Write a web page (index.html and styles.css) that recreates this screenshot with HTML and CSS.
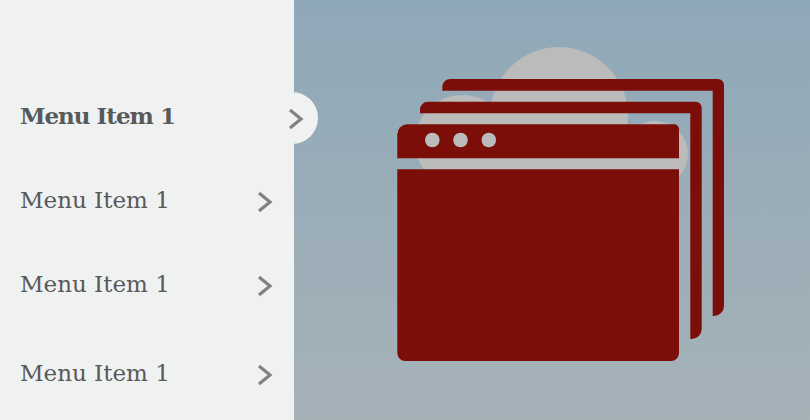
FILE: index.html
```html
<!DOCTYPE html>
<html lang="en">
<head>
<meta charset="utf-8">
<title>Menu</title>
<link rel="stylesheet" href="styles.css">
</head>
<body>
<div class="app">
  <nav class="menu">
    <a class="item active"><span class="label">Menu Item 1</span><span class="tab"><svg class="chev" viewBox="0 0 16 22"><path d="M1 2l11 9-11 9"/></svg></span></a>
    <a class="item"><span class="label">Menu Item 1</span><svg class="chev" viewBox="0 0 16 22"><path d="M1 2l11 9-11 9"/></svg></a>
    <a class="item"><span class="label">Menu Item 1</span><svg class="chev" viewBox="0 0 16 22"><path d="M1 2l11 9-11 9"/></svg></a>
    <a class="item last"><span class="label">Menu Item 1</span><svg class="chev" viewBox="0 0 16 22"><path d="M1 2l11 9-11 9"/></svg></a>
  </nav>
  <main class="stage">
    <svg class="art" viewBox="294 0 516 420" aria-hidden="true">
      <g fill="#bbbbbb">
        <circle cx="559" cy="116" r="69"/>
        <circle cx="462" cy="142" r="47"/>
        <circle cx="655" cy="154" r="33"/>
        <rect x="462" y="140" width="193" height="40"/>
      </g>
      <g fill="#7b0e08">
        <path d="M442.300 90.700v-3.700a8 8 0 0 1 8-8H718a6 6 0 0 1 6 6v221a10 10 0 0 1-10 10h-1.300V90.700z"/>
        <path d="M420 113.300v-3.600a8 8 0 0 1 8-8h267.700a6 6 0 0 1 6 6V329a10 10 0 0 1-10 10h-1.400V113.300z"/>
        <path d="M397.300 158.300v-24a10 10 0 0 1 10-10H674a5 5 0 0 1 5 5v29z"/>
        <path d="M397.300 169.300H679V353a8 8 0 0 1-8 8H405.300a8 8 0 0 1-8-8z"/>
      </g>
      <g fill="#bbbbbb">
        <circle cx="432.300" cy="140" r="7.300"/>
        <circle cx="460.500" cy="140" r="7.300"/>
        <circle cx="488.800" cy="140" r="7.300"/>
      </g>
    </svg>
  </main>
</div>
</body>
</html>
```
FILE: styles.css
```css
* { box-sizing: border-box; }
html, body { margin: 0; height: 100%; }
body { overflow: hidden; }
.app { display: flex; width: 810px; height: 420px; }
.menu {
  width: 294px;
  flex: none;
  background: #f0f2f1;
  padding: 74px 20px 0;
  display: flex;
  flex-direction: column;
  position: relative;
  z-index: 1;
}
.item {
  display: flex;
  align-items: center;
  justify-content: space-between;
  height: 84px;
  color: #58595b;
  font-family: "DejaVu Serif", "Liberation Serif", serif;
  font-size: 23px;
}
.item.last { margin-top: 5px; }
.label { margin-bottom: 1px; }
.item.active { font-weight: 700; letter-spacing: -1px; }
.chev { width: 16px; height: 22px; margin-top: 4px; fill: none; stroke: #808183; stroke-width: 3.200px; flex: none; }
.tab {
  position: absolute;
  left: 268px;
  top: 92px;
  width: 50px;
  height: 52px;
  border-radius: 0 26px 26px 0;
  background: #f0f2f1;
  display: flex;
  align-items: center;
  justify-content: center;
  padding-left: 8px;
}
.tab .chev { margin: 2px 0 0; }
.stage {
  flex: 1;
  background: linear-gradient(#8fa8b8, #a6b2b8);
}
.art { display: block; width: 516px; height: 420px; }
```
